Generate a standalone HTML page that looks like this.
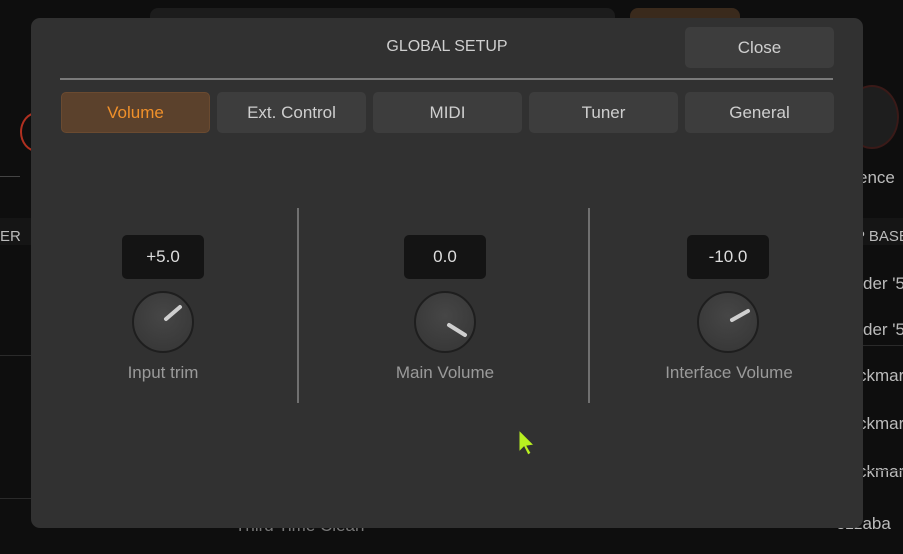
<!DOCTYPE html>
<html><head><style>
body{margin:0;width:903px;height:554px;background:#0e0e0e;position:relative;overflow:hidden;font-family:"Liberation Sans",sans-serif}
.a{position:absolute}
.modal{left:31px;top:18px;width:832px;height:510px;background:#313131;border-radius:9px}
.btn{position:absolute;height:41px;background:#3d3d3d;border-radius:5px;color:#cfcfcf;font-size:17px;display:flex;align-items:center;justify-content:center}
.val{position:absolute;width:82px;height:44px;background:#141414;border-radius:5px;color:#ddd;font-size:17px;display:flex;align-items:center;justify-content:center}
.lbl{position:absolute;width:240px;text-align:center;color:#9a9a9a;font-size:17px}
.bgt{position:absolute;color:#bbb;font-size:17px;white-space:nowrap}
</style></head><body>
<div class="a" style="left:150px;top:8px;width:465px;height:20px;background:#1c1c1c;border-radius:8px"></div>
<div class="a" style="left:630px;top:8px;width:110px;height:20px;background:#3a2a1c;border-radius:8px"></div>
<div class="a" style="left:20px;top:112px;width:30px;height:36px;border:2px solid #b03020;border-radius:50%"></div>
<div class="a" style="left:0;top:176px;width:20px;height:1px;background:#444"></div>
<div class="a" style="left:0;top:218px;width:40px;height:27px;background:#151515"></div>
<div class="bgt" style="left:0;top:228px;font-size:15px">ER</div>
<div class="a" style="left:0;top:355px;width:40px;height:1px;background:#2a2a2a"></div>
<div class="a" style="left:0;top:498px;width:40px;height:1px;background:#2a2a2a"></div>
<div class="a" style="left:845px;top:85px;width:50px;height:60px;border-radius:50%;background:#1e1e1e;border:2px solid #3a1a18"></div>
<div class="bgt" style="left:858px;top:168px">ence</div>
<div class="a" style="left:863px;top:218px;width:40px;height:27px;background:#151515"></div>
<div class="bgt" style="left:855px;top:228px;font-size:15px">P BASE</div>
<div class="bgt" style="left:863px;top:274px">der '5</div>
<div class="bgt" style="left:863px;top:320px">der '5</div>
<div class="bgt" style="left:858px;top:366px">ckmar</div>
<div class="bgt" style="left:858px;top:414px">ckmar</div>
<div class="bgt" style="left:858px;top:462px">ckmar</div>
<div class="bgt" style="left:836px;top:514px">ezzaba</div>
<div class="a" style="left:863px;top:345px;width:40px;height:1px;background:#2a2a2a"></div>
<div class="a" style="left:863px;top:470px;width:40px;height:1px;background:#2a2a2a"></div>
<div class="bgt" style="left:235px;top:516px;color:#777">Third Time Clean</div>
<div class="a modal"></div>
<div class="a" style="left:31px;top:38px;width:832px;text-align:center;color:#cfcfcf;font-size:16px">GLOBAL SETUP</div>
<div class="btn" style="left:685px;top:27px;width:149px">Close</div>
<div class="a" style="left:60px;top:78px;width:773px;height:2px;background:#7a7a7a"></div>
<div class="btn" style="left:61px;top:92px;width:149px;background:#5b412c;color:#f0902a;border:1px solid #6a4a30;box-sizing:border-box">Volume</div>
<div class="btn" style="left:217px;top:92px;width:149px">Ext. Control</div>
<div class="btn" style="left:373px;top:92px;width:149px">MIDI</div>
<div class="btn" style="left:529px;top:92px;width:149px">Tuner</div>
<div class="btn" style="left:685px;top:92px;width:149px">General</div>
<div class="a" style="left:297px;top:208px;width:2px;height:195px;background:#707070"></div>
<div class="a" style="left:588px;top:208px;width:2px;height:195px;background:#707070"></div>
<div class="val" style="left:122px;top:235px">+5.0</div>
<div class="val" style="left:404px;top:235px">0.0</div>
<div class="val" style="left:687px;top:235px">-10.0</div>
<svg class="a" style="left:0;top:0" width="903" height="554">
<defs><radialGradient id="g" cx="50%" cy="40%" r="60%"><stop offset="0" stop-color="#464646"/><stop offset="1" stop-color="#383838"/></radialGradient></defs>
<g stroke="#1e1e1e" stroke-width="2" fill="url(#g)">
<circle cx="163" cy="322" r="30"/><circle cx="445" cy="322" r="30"/><circle cx="728" cy="322" r="30"/></g>
<g stroke="#cfcfcf" stroke-width="4" stroke-linecap="round">
<line x1="166" y1="319" x2="180" y2="307"/>
<line x1="449" y1="325" x2="465" y2="335"/>
<line x1="732" y1="320" x2="748" y2="311"/></g>
<path d="M519 430 L519 452 L524 447 L528 455 L531 453 L527 446 L534 445 Z" fill="#b8f020" stroke="#333" stroke-width="1"/>
</svg>
<div class="lbl" style="left:43px;top:363px">Input trim</div>
<div class="lbl" style="left:325px;top:363px">Main Volume</div>
<div class="lbl" style="left:609px;top:363px">Interface Volume</div>
</body></html>
